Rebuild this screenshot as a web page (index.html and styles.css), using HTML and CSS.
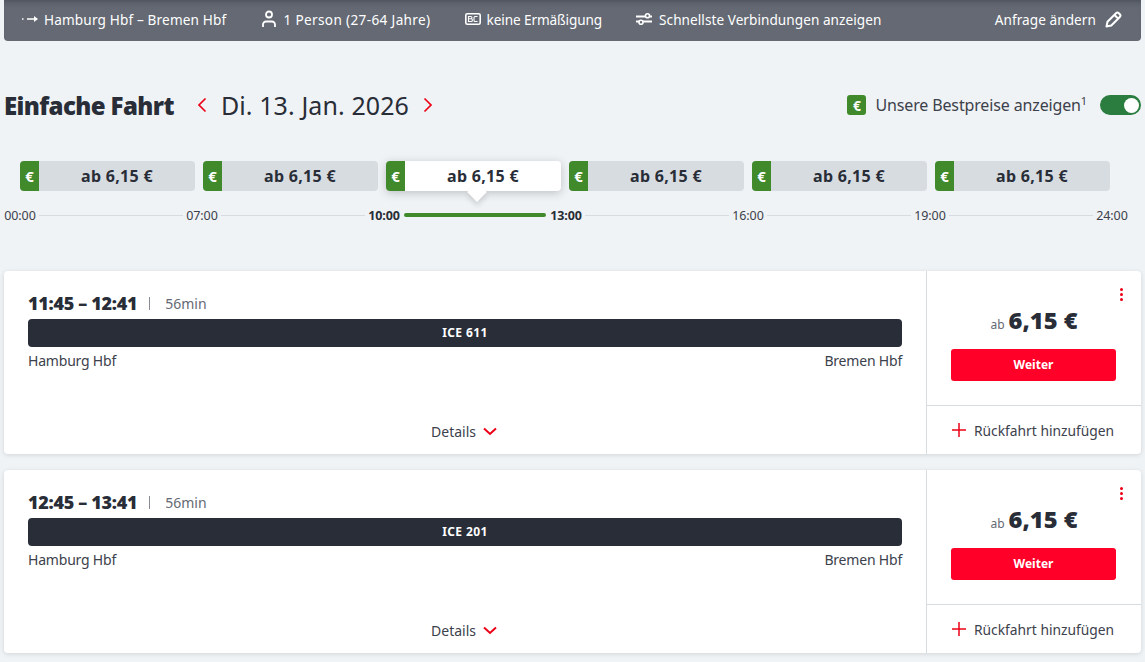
FILE: index.html
```html
<!DOCTYPE html>
<html lang="de">
<head>
<meta charset="utf-8">
<title>Einfache Fahrt</title>
<link rel="stylesheet" href="styles.css">
</head>
<body>
<div class="page">
  <header class="topbar">
    <div class="summary">
      <span class="item item-route"><svg class="ico" width="18" height="12" viewBox="0 0 18 12"><path d="M0 6h1.500M5 6h10" fill="none" stroke="#fff" stroke-width="1.600"/><path d="M12 3l4 3-4 3z" fill="#fff"/></svg>Hamburg Hbf – Bremen Hbf</span>
      <span class="item item-person"><svg class="ico" width="16" height="18" viewBox="0 0 16 18"><circle cx="8" cy="4.500" r="3" fill="none" stroke="#fff" stroke-width="1.800"/><path d="M2 17v-2.500a3 3 0 0 1 3-3h6a3 3 0 0 1 3 3V17" fill="none" stroke="#fff" stroke-width="1.800"/></svg>1 Person (27-64 Jahre)</span>
      <span class="item item-bc"><svg class="ico" width="16" height="12" viewBox="0 0 16 12"><rect x="0.800" y="0.800" width="14.400" height="10.400" rx="1.500" fill="none" stroke="#fff" stroke-width="1.600"/><path d="M3.500 3.500h2.300a1 1 0 0 1 0 2.300H3.500zM3.500 5.800h2.600a1.100 1.100 0 0 1 0 2.700H3.500zM12.500 3.500H10a1 1 0 0 0-1 1v3a1 1 0 0 0 1 1h2.500" fill="none" stroke="#fff" stroke-width="1.100"/></svg>keine Ermäßigung</span>
      <span class="item item-filter"><svg class="ico" width="16" height="12" viewBox="0 0 16 12"><path d="M0 3.500h16M0 8.500h16" stroke="#fff" stroke-width="2"/><circle cx="11.500" cy="2.800" r="2" fill="#646973" stroke="#fff" stroke-width="1.600"/><circle cx="5" cy="9.200" r="2" fill="#646973" stroke="#fff" stroke-width="1.600"/></svg>Schnellste Verbindungen anzeigen</span>
    </div>
    <span class="change">Anfrage ändern<svg width="17" height="17" viewBox="0 0 17 17"><path d="M1.500 15.500l1-4.800L11 2.200a2 2 0 0 1 2.800 0l1 1a2 2 0 0 1 0 2.800L6.300 14.500z M9.500 4l3.500 3.500" fill="none" stroke="#fff" stroke-width="2" stroke-linejoin="round"/></svg></span>
  </header>

  <section class="headline">
    <div class="headline-left">
      <h1>Einfache Fahrt</h1>
      <svg class="nav" width="10" height="16" viewBox="0 0 10 16"><path d="M8.500 1.500L2 8l6.500 6.500" fill="none" stroke="#ec0016" stroke-width="1.700"/></svg>
      <span class="date">Di. 13. Jan. 2026</span>
      <svg class="nav" width="10" height="16" viewBox="0 0 10 16"><path d="M1.500 1.500L8 8l-6.500 6.500" fill="none" stroke="#ec0016" stroke-width="1.700"/></svg>
    </div>
    <div class="headline-right">
      <span class="badge">€</span>
      <span class="best">Unsere Bestpreise anzeigen<sup>1</sup></span>
      <span class="toggle"><span class="knob"></span></span>
    </div>
  </section>

  <section class="chips">
    <div class="chip"><span class="chip-euro">€</span><span class="chip-price">ab 6,15 €</span></div>
    <div class="chip"><span class="chip-euro">€</span><span class="chip-price">ab 6,15 €</span></div>
    <div class="chip active"><span class="chip-euro">€</span><span class="chip-price">ab 6,15 €</span><span class="arrow"></span></div>
    <div class="chip"><span class="chip-euro">€</span><span class="chip-price">ab 6,15 €</span></div>
    <div class="chip"><span class="chip-euro">€</span><span class="chip-price">ab 6,15 €</span></div>
    <div class="chip"><span class="chip-euro">€</span><span class="chip-price">ab 6,15 €</span></div>
  </section>

  <section class="timeline">
    <span class="tick">00:00</span><span class="line"></span>
    <span class="tick">07:00</span><span class="line"></span>
    <span class="tick strong">10:00</span><span class="line green"></span>
    <span class="tick strong">13:00</span><span class="line"></span>
    <span class="tick">16:00</span><span class="line"></span>
    <span class="tick">19:00</span><span class="line"></span>
    <span class="tick">24:00</span>
  </section>

  <article class="card">
    <div class="trip">
      <div class="times"><strong>11:45 – 12:41</strong><span class="sep"></span><span class="dur">56min</span></div>
      <div class="bar">ICE 611</div>
      <div class="stations"><span>Hamburg Hbf</span><span>Bremen Hbf</span></div>
      <div class="details">Details<svg width="14" height="9" viewBox="0 0 14 9"><path d="M1 1.500l6 5.500 6-5.500" fill="none" stroke="#ec0016" stroke-width="2"/></svg></div>
    </div>
    <div class="offer">
      <div class="offer-top">
        <span class="dots"><i></i><i></i><i></i></span>
        <div class="price"><span class="ab">ab</span><span class="amount">6,15 €</span></div>
        <div class="btn">Weiter</div>
      </div>
      <div class="return"><svg width="16" height="16" viewBox="0 0 16 16"><path d="M8 1v14M1 8h14" stroke="#ec0016" stroke-width="1.500"/></svg>Rückfahrt hinzufügen</div>
    </div>
  </article>

  <article class="card">
    <div class="trip">
      <div class="times"><strong>12:45 – 13:41</strong><span class="sep"></span><span class="dur">56min</span></div>
      <div class="bar">ICE 201</div>
      <div class="stations"><span>Hamburg Hbf</span><span>Bremen Hbf</span></div>
      <div class="details">Details<svg width="14" height="9" viewBox="0 0 14 9"><path d="M1 1.500l6 5.500 6-5.500" fill="none" stroke="#ec0016" stroke-width="2"/></svg></div>
    </div>
    <div class="offer">
      <div class="offer-top">
        <span class="dots"><i></i><i></i><i></i></span>
        <div class="price"><span class="ab">ab</span><span class="amount">6,15 €</span></div>
        <div class="btn">Weiter</div>
      </div>
      <div class="return"><svg width="16" height="16" viewBox="0 0 16 16"><path d="M8 1v14M1 8h14" stroke="#ec0016" stroke-width="1.500"/></svg>Rückfahrt hinzufügen</div>
    </div>
  </article>
</div>
</body>
</html>
```
FILE: styles.css
```css
* { box-sizing: border-box; }
html, body { margin: 0; padding: 0; height: 100%; overflow: hidden; }
body {
  background: #f0f3f5;
  color: #282d37;
  font-family: "Noto Sans", "Liberation Sans", sans-serif;
  font-size: 14px;
}
.page { padding: 0 4px; }

.topbar {
  height: 41px;
  background: #646973;
  border-radius: 0 0 4px 4px;
  box-shadow: inset 0 6px 6px -5px rgba(40, 45, 55, .5);
  color: #fff;
  display: flex;
  align-items: center;
  justify-content: space-between;
  padding: 0 19px 3px 18px;
  font-size: 13.600px;
}
.summary { display: flex; align-items: center; }
.item { display: flex; align-items: center; white-space: nowrap; margin-right: 34px; }
.ico { margin-right: 6px; flex: none; }
.item-route { letter-spacing: .15px; margin-right: 35px; }
.item-route .ico { margin-right: 4px; }
.item-person { letter-spacing: .35px; margin-right: 34px; }
.item-bc { letter-spacing: -.1px; }
.item-filter { letter-spacing: .05px; }
.item-filter .ico { margin-right: 7px; }
.change { display: flex; align-items: center; gap: 9px; letter-spacing: .07px; }

.headline {
  display: flex;
  justify-content: space-between;
  align-items: center;
  height: 50px;
  margin-top: 39px;
}
.headline-left { display: flex; align-items: center; }
h1 { margin: 0 23px 0 0; font-size: 24px; font-weight: 900; letter-spacing: -.6px; white-space: nowrap; }
.date { font-size: 25px; margin: 0 14px; letter-spacing: .1px; white-space: nowrap; }
.headline-right { display: flex; align-items: center; }
.badge {
  width: 19px; height: 20px; border-radius: 3px;
  background: #408a2b; color: #fff;
  font-size: 14px; font-weight: 700;
  display: flex; align-items: center; justify-content: center;
  margin-right: 9px;
}
.best { font-size: 16px; letter-spacing: -.14px; white-space: nowrap; color: #3c414b; }
.best sup { font-size: 11px; line-height: 0; }
.toggle {
  width: 41px; height: 20px; border-radius: 10px;
  background: #2a7d3f;
  margin-left: 13px;
  display: flex; align-items: center; justify-content: flex-end;
  padding-right: 2px;
}
.knob { width: 15px; height: 15px; border-radius: 50%; background: #fff; }

.chips {
  display: flex;
  gap: 8px;
  margin: 31px 0 0 16px;
}
.chip {
  position: relative;
  width: 175px;
  height: 30px;
  display: flex;
  background: #d7dce1;
  border-radius: 4px;
}
.chip-euro {
  width: 19px;
  background: #408a2b;
  color: #fff;
  border-radius: 4px 0 0 4px;
  font-size: 15px;
  font-weight: 700;
  display: flex; align-items: center; justify-content: center;
  padding-bottom: 1px;
}
.chip-price {
  flex: 1;
  display: flex; align-items: center; justify-content: center;
  font-weight: 700;
  font-size: 16px;
  letter-spacing: .3px;
}
.active { background: #fff; box-shadow: 0 2px 8px rgba(40, 45, 55, .25); }
.arrow {
  position: absolute;
  left: 84px;
  top: 24px;
  width: 14px;
  height: 14px;
  background: #fff;
  transform: rotate(45deg);
  box-shadow: 3px 3px 5px rgba(40, 45, 55, .15);
}

.timeline {
  display: flex;
  align-items: center;
  height: 20px;
  margin-top: 14px;
  font-size: 12.500px;
}
.tick { width: 32px; flex: none; text-align: center; color: #3c414b; letter-spacing: -.1px; white-space: nowrap; }
.strong { font-weight: 700; color: #282d37; }
.line { flex: 0 0 144px; height: 1px; background: #d7dce1; margin: 0 3px; }
.green { flex-basis: 142px; height: 4px; background: #408a2b; border-radius: 2px; margin: 0 4px; position: relative; }

.card {
  display: flex;
  height: 183px;
  margin-bottom: 16px;
  background: #fff;
  border-radius: 4px;
  box-shadow: 0 1px 4px rgba(40, 45, 55, .15);
}
.card:first-of-type { margin-top: 46px; }
.trip {
  width: 923px;
  padding: 22px 24px 0;
  border-right: 1px solid #d7dce1;
  display: flex;
  flex-direction: column;
}
.times { display: flex; align-items: center; height: 20px; }
.times strong { font-size: 18px; font-weight: 900; letter-spacing: -.3px; white-space: nowrap; }
.sep { width: 1px; height: 13px; background: #878c96; margin: 0 15px 0 12px; }
.dur { font-size: 14px; color: #646973; }
.bar {
  height: 28px;
  margin-top: 6px;
  background: #282d37;
  color: #fff;
  border-radius: 4px;
  font-size: 12px;
  letter-spacing: .4px;
  font-weight: 700;
  display: flex; align-items: center; justify-content: center;
  padding-bottom: 1px;
}
.stations { display: flex; justify-content: space-between; margin-top: 4px; font-size: 14px; color: #3c414b; letter-spacing: -.2px; }
.details {
  margin-top: 52px;
  padding-right: 2px;
  display: flex; align-items: center; justify-content: center; gap: 7px;
  font-size: 14px;
  color: #3c414b;
}
.offer { flex: 1; display: flex; flex-direction: column; }
.offer-top {
  position: relative;
  height: 135px;
  border-bottom: 1px solid #d7dce1;
  padding: 0 24px;
  display: flex;
  flex-direction: column;
  align-items: center;
}
.dots {
  position: absolute;
  top: 17px;
  right: 18px;
  display: flex; flex-direction: column; gap: 2px;
}
.dots i { width: 3px; height: 3px; border-radius: 50%; background: #ec0016; display: block; }
.price { display: flex; align-items: baseline; margin-top: 33px; height: 34px; }
.ab { font-size: 12px; color: #646973; margin-right: 4px; }
.amount { font-size: 23.700px; font-weight: 900; color: #282d37; }
.btn {
  align-self: flex-start;
  width: 165px;
  height: 32px;
  margin-top: 11px;
  background: #ff0028;
  border-radius: 3px;
  color: #fff;
  font-size: 12px;
  font-weight: 700;
  display: flex; align-items: center; justify-content: center;
  padding-bottom: 1px;
}
.return {
  flex: 1;
  display: flex;
  align-items: center;
  padding-left: 24px;
  gap: 7px;
  font-size: 13.800px;
  color: #3c414b;
  white-space: nowrap;
}
```
